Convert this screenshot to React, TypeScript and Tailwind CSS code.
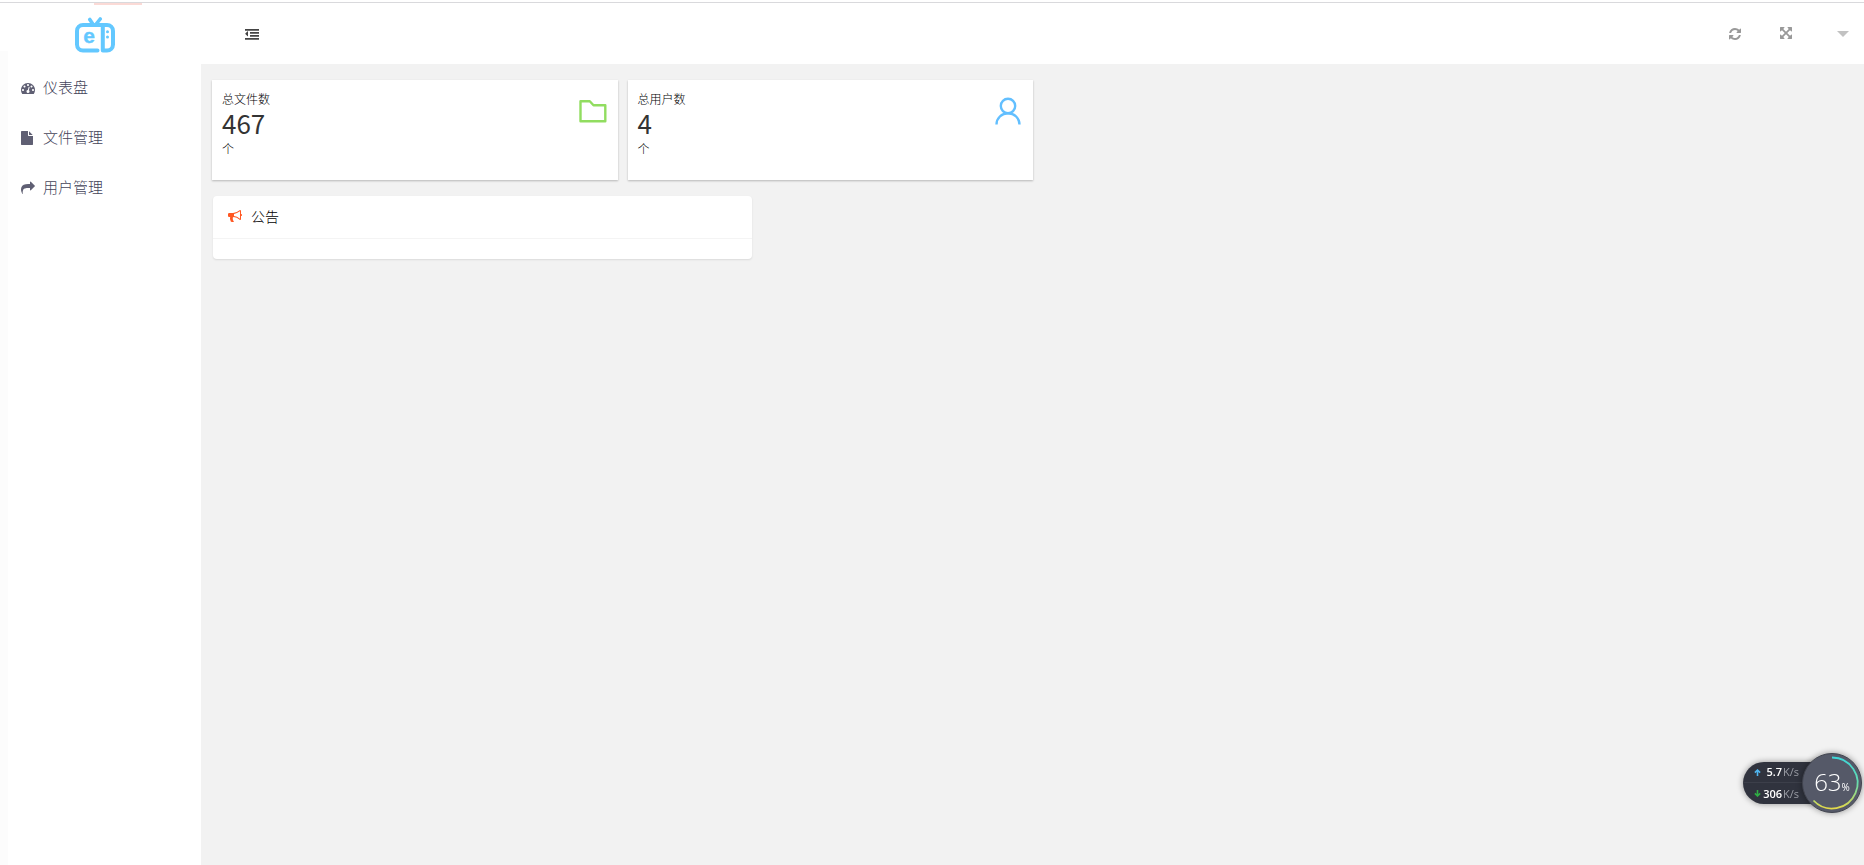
import React from 'react';

interface IconProps {
  className?: string;
}

const icons = {
  dashboard:
    'M384 1152q0-53-37.5-90.5t-90.5-37.5-90.5 37.5-37.5 90.5 37.5 90.5 90.5 37.5 90.5-37.5 37.5-90.5zm192-448q0-53-37.5-90.5t-90.5-37.5-90.5 37.5-37.5 90.5 37.5 90.5 90.5 37.5 90.5-37.5 37.5-90.5zm428 481l101-382q6-26-7.5-48.5t-38.5-29.5-48 6.5-30 39.5l-101 382q-60 5-107 43.5t-63 98.5q-20 77 20 146t117 89 146-20 89-117q16-60-6-117t-72-91zm660-33q0-53-37.5-90.5t-90.5-37.5-90.5 37.5-37.5 90.5 37.5 90.5 90.5 37.5 90.5-37.5 37.5-90.5zm-640-640q0-53-37.5-90.5t-90.5-37.5-90.5 37.5-37.5 90.5 37.5 90.5 90.5 37.5 90.5-37.5 37.5-90.5zm448 192q0-53-37.5-90.5t-90.5-37.5-90.5 37.5-37.5 90.5 37.5 90.5 90.5 37.5 90.5-37.5 37.5-90.5zm320 448q0 261-141 483-19 29-54 29h-1402q-35 0-54-29-141-221-141-483 0-182 71-348t191-286 286-191 348-71 348 71 286 191 191 286 71 348z',
  file: 'M1024 512v-472q22 14 36 28l408 408q14 14 28 36h-472zm-128 32q0 40 28 68t68 28h544v1056q0 40-28 68t-68 28h-1344q-40 0-68-28t-28-68v-1600q0-40 28-68t68-28h800v544z',
  share:
    'M1792 640q0 26-19 45l-512 512q-19 19-45 19t-45-19-19-45v-256h-224q-98 0-175.5 6t-154 21.5-133 42.5-105.5 69.5-80 101-48.5 138.5-17.5 181q0 55 5 123 0 6 2.5 23.5t2.5 26.5q0 15-8.5 25t-23.5 10q-16 0-28-17-7-9-13-22t-13.5-30-10.5-24q-127-285-127-451 0-199 53-333 162-403 875-403h224v-256q0-26 19-45t45-19 45 19l512 512q19 19 19 45z',
  outdent:
    'M384 576v576q0 13-9.500 22.500t-22.500 9.500q-14 0-23-9l-288-288q-9-9-9-23t9-23l288-288q9-9 23-9 13 0 22.500 9.500t9.500 22.500zM0 256h1792v230H0zM640 640h1152v230H640zM640 1024h1152v230H640zM0 1408h1792v230H0z',
  refresh:
    'M1639 1056q0 5-1 7-64 268-268 434.5t-478 166.500q-146 0-282.500-55t-243.500-157l-129 129q-19 19-45 19t-45-19-19-45v-448q0-26 19-45t45-19h448q26 0 45 19t19 45-19 45l-137 137q71 66 161 102t187 36q134 0 250-65t186-179q11-17 53-117 8-23 30-23h192q13 0 22.500 9.500t9.500 22.500zm25-800v448q0 26-19 45t-45 19h-448q-26 0-45-19t-19-45 19-45l138-138q-148-137-349-137-134 0-250 65t-186 179q-11 17-53 117-8 23-30 23h-199q-13 0-22.500-9.500t-9.500-22.500v-7q65-268 270-434.500t480-166.500q146 0 284 55.500t245 156.500l130-129q19-19 45-19t45 19 19 45z',
  expand:
    'M1283 413l-355 355 355 355 144-144q29-31 70-14 39 17 39 59v448q0 26-19 45t-45 19h-448q-42 0-59-40-17-39 14-69l144-144-355-355-355 355 144 144q31 30 14 69-17 40-59 40h-448q-26 0-45-19t-19-45v-448q0-42 40-59 39-17 69 14l144 144 355-355-355-355-144 144q-19 19-45 19-12 0-24-5-40-17-40-59v-448q0-26 19-45t45-19h448q42 0 59 40 17 39-14 69l-144 144 355 355 355-355-144-144q-31-30-14-69 17-40 59-40h448q26 0 45 19t19 45v448q0 42-39 59-13 5-25 5-26 0-45-19z',
  bullhorn:
    'M1664 640q53 0 90.5 37.5t37.5 90.5-37.5 90.5-90.5 37.5v384q0 52-38 90t-90 38q-417-347-812-380-58 19-91 66t-31 100.5 40 92.5q-20 33-23 65.5t6 58 33.5 55 48 50 61.5 50.5q-29 58-111.5 83t-168.5 11.5-132-55.5q-7-23-29.5-87.5t-32-94.5-23-89-15-101 3.5-98.5 22-110.5h-122q-66 0-113-47t-47-113v-192q0-66 47-113t113-47h480q435 0 896-384 52 0 90 38t38 90v384zm-128 604v-954q-394 302-768 343v270q377 42 768 341z',
};

const Icon: React.FC<IconProps & { name: keyof typeof icons }> = ({ name, className = '' }) => (
  <svg viewBox="0 0 1792 1792" fill="currentColor" aria-hidden="true" className={`w-3.5 h-3.5 shrink-0 ${className}`}>
    <path d={icons[name]} />
  </svg>
);

const Logo: React.FC = () => (
  <svg viewBox="0 0 40 36" className="w-10 h-9 text-[#63c8ff]" fill="none" stroke="currentColor" strokeWidth="4" strokeLinecap="round" strokeLinejoin="round">
    <path d="M22.500 33.500H8a6 6 0 0 1-6-6V14a6 6 0 0 1 6-6h24a6 6 0 0 1 6 6v13.500a6 6 0 0 1-6 6h-4.200V9" />
    <path d="M14.800 2.500l3 4.500M25.200 2l-4 5" strokeWidth="3.600" />
    <circle cx="32.500" cy="14.700" r="1.500" fill="currentColor" stroke="none" />
    <circle cx="32.500" cy="20" r="1.500" fill="currentColor" stroke="none" />
    <text x="14" y="26" textAnchor="middle" fill="currentColor" stroke="currentColor" strokeWidth="0.300" className="font-['Liberation_Sans',sans-serif] text-[21px] font-bold">e</text>
  </svg>
);

const FolderIcon: React.FC = () => (
  <svg viewBox="0 0 28 28" className="w-7 h-7 text-[#91dd60]" fill="none" stroke="currentColor" strokeWidth="2.400" strokeLinejoin="round">
    <path d="M1.500 4.200H10.800L14.500 8.200H26.300V24.300H1.500Z" />
  </svg>
);

const UserIcon: React.FC = () => (
  <svg viewBox="0 0 28 28" className="w-7 h-7 text-[#62bfff]" fill="none" stroke="currentColor" strokeWidth="2.400">
    <circle cx="14" cy="9" r="7.200" />
    <path d="M2.500 27.500a11.500 11.300 0 0 1 23 0" />
  </svg>
);

const menu: { icon: keyof typeof icons; label: string }[] = [
  { icon: 'dashboard', label: '仪表盘' },
  { icon: 'file', label: '文件管理' },
  { icon: 'share', label: '用户管理' },
];

const stats = [
  { title: '总文件数', value: 467, unit: '个', icon: FolderIcon },
  { title: '总用户数', value: 4, unit: '个', icon: UserIcon },
];

const speeds = [
  { value: '5.7', color: 'text-[#4fb4ee]', path: 'M4 8V1.500M1 4.200L4 1.200L7 4.200' },
  { value: '306', color: 'text-[#2fae44]', path: 'M4 0V6.500M1 3.800L4 6.800L7 3.800' },
];

const SpeedWidget: React.FC = () => (
  <div className="fixed right-0.5 bottom-[52px] flex items-center font-['Open_Sans',sans-serif]">
    <div className="w-[89px] h-[42px] -mr-[30px] rounded-l-full bg-[#30333e] shadow-[0_0_6px_rgba(0,0,0,0.4)] divide-y divide-[#3c3f4a]">
      {speeds.map(({ value, color, path }) => (
        <div key={value} className="h-[21px] pl-[11px] flex items-center">
          <svg viewBox="0 0 8 8" className={`w-[7px] h-[7px] shrink-0 ${color}`} fill="none" stroke="currentColor" strokeWidth="1.800">
            <path d={path} />
          </svg>
          <span className="w-[21px] text-right text-[11px] leading-4 font-semibold text-white">{value}</span>
          <span className="pl-px text-[11px] leading-4 text-[#9a9da5]">K/s</span>
        </div>
      ))}
    </div>
    <div className="relative w-[60px] h-[60px] rounded-full bg-[#555968] border border-[#41444f] shadow-[0_0_6px_rgba(0,0,0,0.4)] flex items-center justify-center text-white">
      <svg viewBox="0 0 60 60" className="absolute -inset-px w-[60px] h-[60px]" fill="none" strokeWidth="1.800">
        <defs>
          <linearGradient id="ring" x1="0" y1="0" x2="0" y2="1">
            <stop offset="0" stopColor="#3fd6d8" />
            <stop offset="0.500" stopColor="#66dcae" />
            <stop offset="1" stopColor="#e3d94a" />
          </linearGradient>
        </defs>
        <path d="M30 4.500A25.500 25.500 0 1 1 11.500 47.500" stroke="url(#ring)" />
      </svg>
      <span className="pb-0.5 text-2xl font-light">63</span>
      <span className="pt-2 text-[10px]">%</span>
    </div>
  </div>
);

const App: React.FC = () => {
  return (
    <div className="relative min-h-screen flex flex-col bg-white font-['Noto_Sans_CJK_SC',sans-serif] text-[#333]">
      <div className="h-[3px] border-b border-[#d9d9dc]" />
      <div className="absolute top-[3px] left-[94px] w-12 h-0.5 bg-[#fbdad6]" />

      <div className="flex flex-1">
        <div className="w-2 pt-12 flex shrink-0">
          <div className="flex-1 bg-[#fcfcfc]" />
        </div>

        {/* Sidebar */}
        <aside className="w-[193px] shrink-0">
          <div className="h-[60px] pl-[67px] pt-3.5">
            <Logo />
          </div>
          <nav>
            {menu.map(({ icon, label }) => (
              <a key={label} href="#" className="h-[50px] pl-[13px] flex items-center gap-2 text-[15px] leading-5 font-light text-[#5f5f73]">
                <Icon name={icon} />
                <span className="pb-0.5 text-[#44445a]">{label}</span>
              </a>
            ))}
          </nav>
        </aside>

        <div className="flex-1 min-w-0 flex flex-col">
          {/* Header */}
          <header className="h-[61px] pl-11 pr-[15px] flex items-center justify-between">
            <button aria-label="收起菜单" className="text-[#444]">
              <Icon name="outdent" />
            </button>
            <div className="flex items-center text-[#999]">
              <button aria-label="刷新" className="mr-[38px]">
                <Icon name="refresh" />
              </button>
              <button aria-label="全屏" className="mr-[43px]">
                <Icon name="expand" />
              </button>
              <button aria-label="更多" className="border-x-6 border-t-6 border-x-transparent border-t-[#c2c2c2]" />
            </div>
          </header>

          <main className="flex-1 pt-4 bg-[#f2f2f2]">
            <div className="pl-[11px] grid grid-cols-4 gap-2.5">
              {stats.map(({ title, value, unit, icon: StatIcon }) => (
                <section key={title} className="h-[100px] pl-2.5 pr-[11px] py-2.5 flex items-start justify-between bg-white shadow-[0_1px_2px_rgba(0,0,0,0.25)]">
                  <div>
                    <h2 className="text-xs leading-[18px] font-light text-black">{title}</h2>
                    <p className="text-[26px] leading-[30px]">{value}</p>
                    <p className="pt-0.5 text-xs leading-[18px] font-light text-black">{unit}</p>
                  </div>
                  <div className="pt-[7px]">
                    <StatIcon />
                  </div>
                </section>
              ))}
            </div>

            {/* Announcements */}
            <div className="mt-4 pl-3 grid grid-cols-3 gap-[17px]">
              <section className="rounded bg-white shadow-[0_1px_2px_rgba(0,0,0,0.1)]">
                <h2 className="h-[43px] px-[15px] pb-0.5 flex items-center gap-[9px] border-b border-[#f4f4f4] text-sm font-light text-black">
                  <Icon name="bullhorn" className="text-[#ff5722]" />
                  公告
                </h2>
                <div className="h-5" />
              </section>
            </div>
          </main>
        </div>
      </div>

      <SpeedWidget />
    </div>
  );
};

export default App;
